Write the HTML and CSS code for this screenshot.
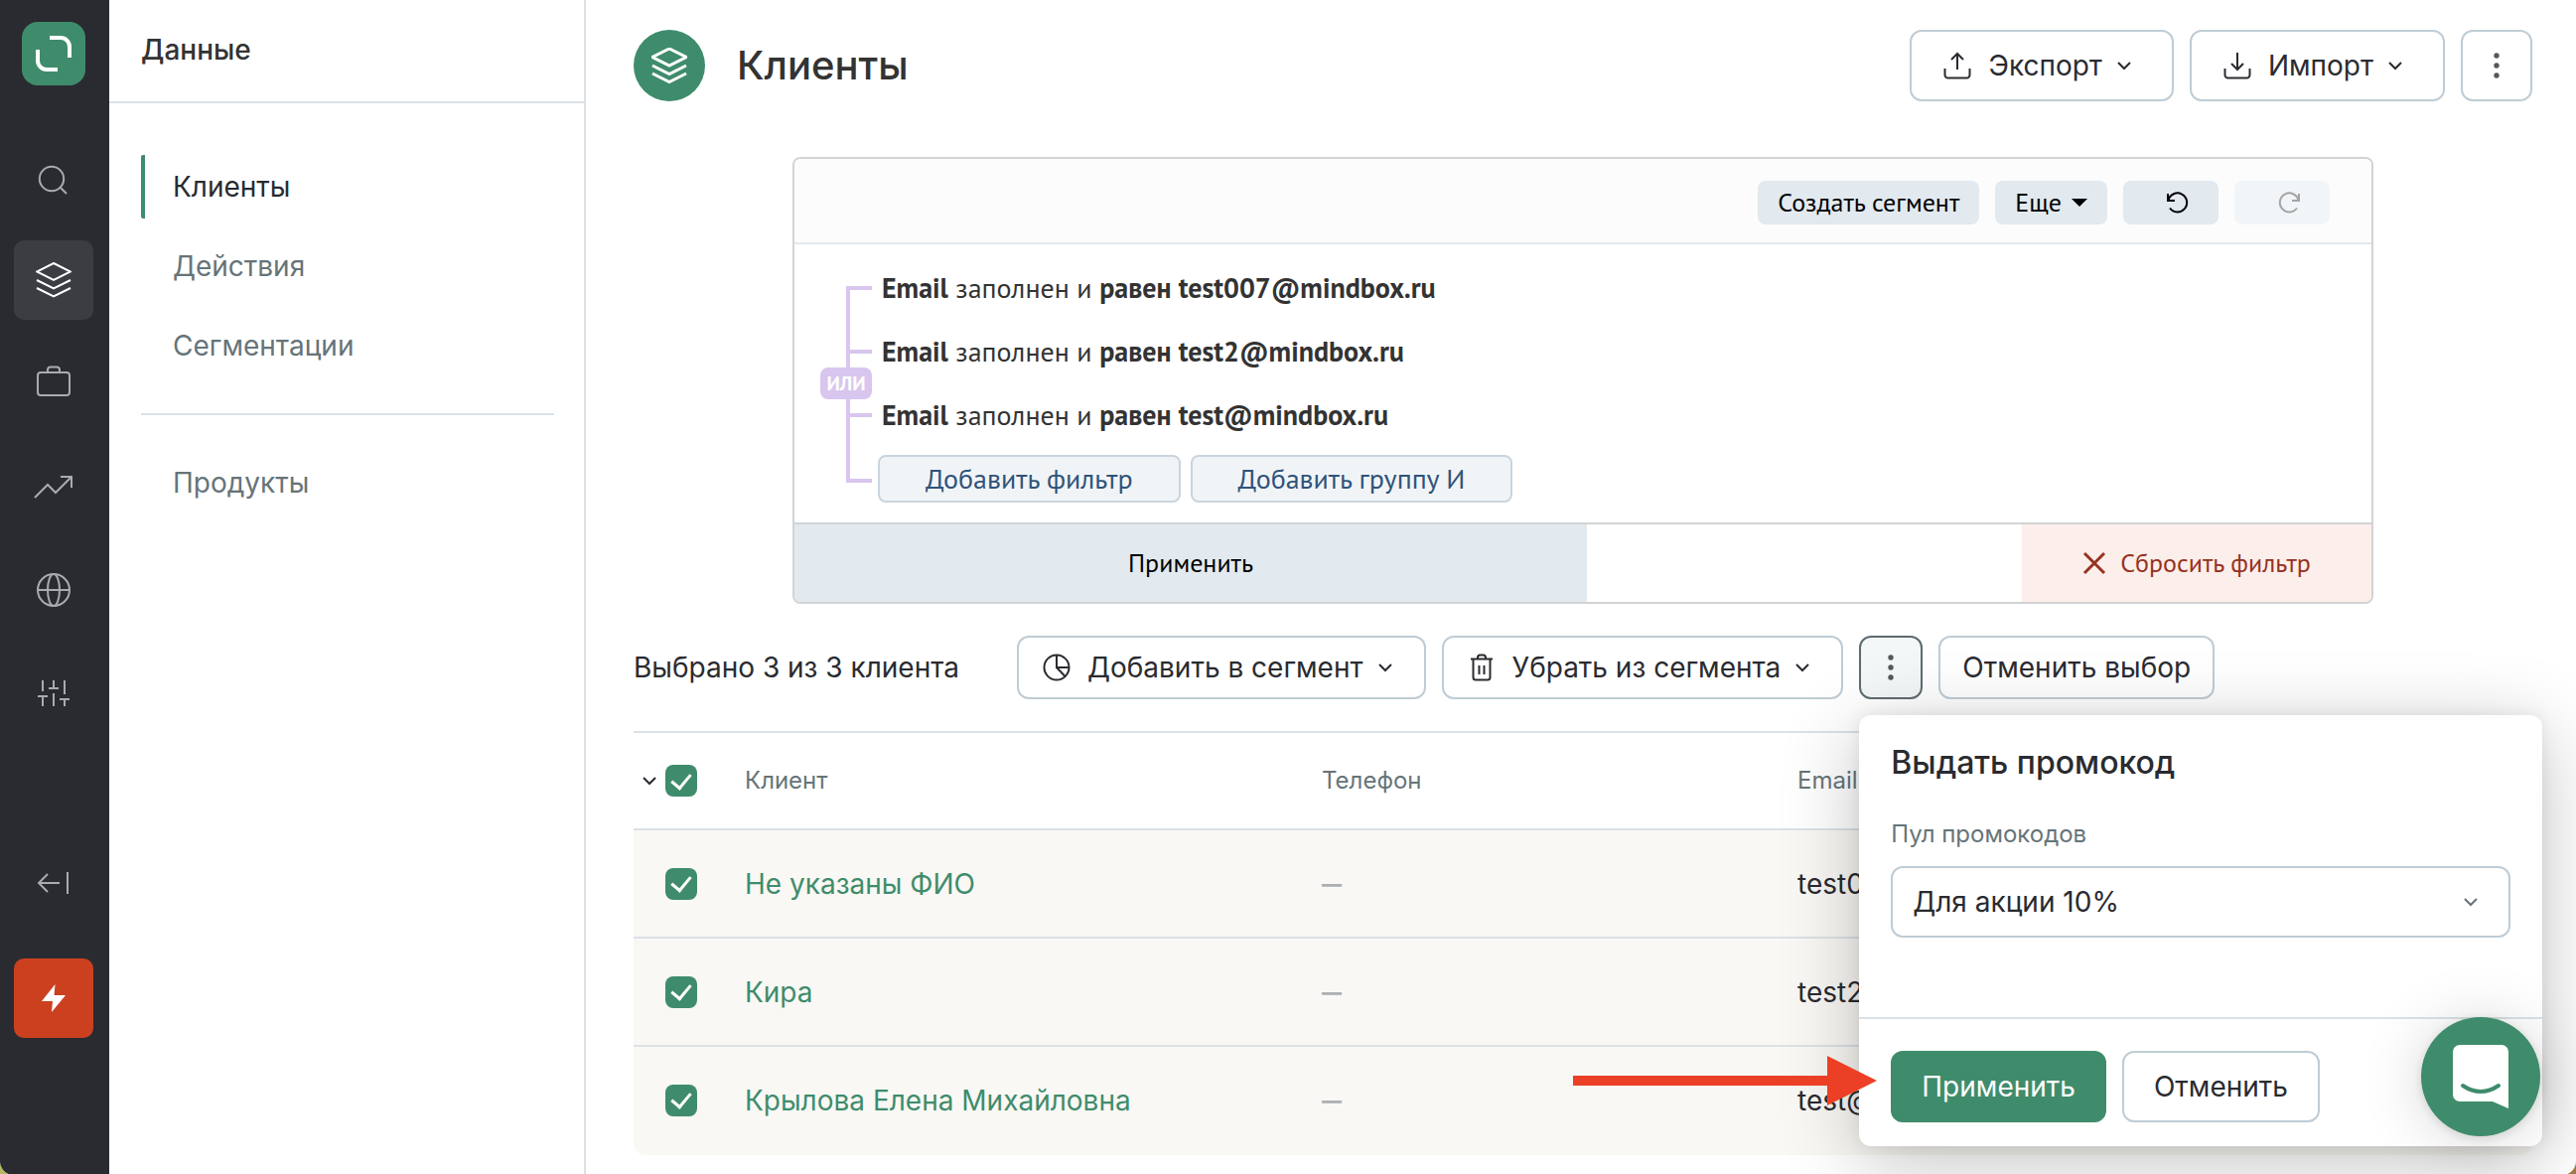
FILE: index.html
```html
<!DOCTYPE html>
<html lang="ru">
<head>
<meta charset="utf-8">
<title>Клиенты</title>
<meta name="viewport" content="width=device-width, initial-scale=1">
<link rel="stylesheet" href="styles.css">
</head>
<body>
<svg class="sprite" aria-hidden="true">
  <symbol id="i-layers" viewBox="0 0 36 36"><path d="M18 1 35 9.500 18 18 1 9.500zM1 18l17 8.500L35 18M1 26l17 8.500L35 26"/></symbol>
  <symbol id="i-chevron" viewBox="0 0 16 16"><path d="M2 5l6 6 6-6"/></symbol>
  <symbol id="i-dots" viewBox="0 0 6 30"><circle cx="3" cy="5" r="2.700"/><circle cx="3" cy="15" r="2.700"/><circle cx="3" cy="25" r="2.700"/></symbol>
</svg>
<div class="app">
  <nav class="rail" aria-label="Разделы">
    <a class="rail-logo" href="#" aria-label="Главная"><svg width="36" height="36" viewBox="0 0 36 36"><path d="M14 2h11a9 9 0 0 1 9 9v11M2 14v11a9 9 0 0 0 9 9h11"/></svg></a>
    <a class="rail-item" href="#" aria-label="Поиск"><svg width="36" height="36" viewBox="0 0 36 36"><circle cx="16" cy="20" r="12.200"/><path d="M24.500 28.500 31 35"/></svg></a>
    <a class="rail-item rail-item-active" href="#" aria-label="Данные"><svg width="36" height="36"><use href="#i-layers"/></svg></a>
    <a class="rail-item" href="#" aria-label="Кампании"><svg width="36" height="36" viewBox="0 0 36 36"><rect x="2" y="7" width="32" height="23" rx="3"/><path d="M12 7V4.500A3 3 0 0 1 15 1.500h6a3 3 0 0 1 3 3V7"/></svg></a>
    <a class="rail-item" href="#" aria-label="Отчеты"><svg width="40" height="36" viewBox="0 0 40 36"><path d="M1 29 14 16l8 8L38 8M27 8h11v11"/></svg></a>
    <a class="rail-item" href="#" aria-label="Сайты"><svg width="36" height="36" viewBox="0 0 36 36"><circle cx="18" cy="18" r="16"/><ellipse cx="18" cy="18" rx="6" ry="16"/><path d="M2 18h32"/></svg></a>
    <a class="rail-item" href="#" aria-label="Настройки"><svg width="36" height="36" viewBox="0 0 36 36"><path d="M7 5v11M7 21v10M2 21h10M18 5v8M13 13h10M18 18v13M29 5v14M29 24v7M24 24h10"/></svg></a>
    <button class="rail-item rail-collapse" type="button" aria-label="Свернуть"><svg width="36" height="36" viewBox="0 0 36 36"><path d="M3 18h21M12 9l-9 9 9 9M32 7v22"/></svg></button>
    <button class="rail-item rail-alert" type="button" aria-label="События"><svg width="28" height="28" viewBox="0 0 28 28"><path d="M15.500 0 2 17h11l-1 11L26 11H14.500z"/></svg></button>
  </nav>
  <aside class="side">
    <h2 class="side-title">Данные</h2>
    <ul class="side-menu">
      <li><a class="side-link side-link-active" href="#">Клиенты</a></li>
      <li><a class="side-link" href="#">Действия</a></li>
      <li><a class="side-link" href="#">Сегментации</a></li>
    </ul>
    <ul class="side-menu side-menu-extra">
      <li><a class="side-link" href="#">Продукты</a></li>
    </ul>
  </aside>
  <main class="main">
    <header class="head">
      <span class="head-icon"><svg width="36" height="36"><use href="#i-layers"/></svg></span>
      <h1 class="head-title">Клиенты</h1>
      <button class="btn btn-menu" type="button"><svg class="lead" width="28" height="28" viewBox="0 0 28 28"><path d="M14 18V2M8 8l6-6 6 6M1.500 17v6.500a3 3 0 0 0 3 3h19a3 3 0 0 0 3-3V17"/></svg>Экспорт<svg class="chev" width="16" height="16"><use href="#i-chevron"/></svg></button>
      <button class="btn btn-menu" type="button"><svg class="lead" width="28" height="28" viewBox="0 0 28 28"><path d="M14 1v17M8 12l6 6 6-6M1.500 17v6.500a3 3 0 0 0 3 3h19a3 3 0 0 0 3-3V17"/></svg>Импорт<svg class="chev" width="16" height="16"><use href="#i-chevron"/></svg></button>
      <button class="btn btn-dots" type="button" aria-label="Еще"><svg width="6" height="30"><use href="#i-dots"/></svg></button>
    </header>

    <section class="filter" aria-label="Фильтр">
      <div class="filter-bar">
        <button class="fbtn" type="button">Создать сегмент</button>
        <button class="fbtn" type="button">Еще<span class="caret"></span></button>
        <button class="fbtn fbtn-icon" type="button" aria-label="Отменить"><svg width="24" height="24" viewBox="0 0 24 24"><path d="M2 3v7h7M2.500 9.500A9.500 9.500 0 1 1 4 17.500"/></svg></button>
        <button class="fbtn fbtn-icon" type="button" aria-label="Повторить" disabled><svg width="24" height="24" viewBox="0 0 24 24"><path d="M22 3v7h-7M21.500 9.500A9.500 9.500 0 1 0 20 17.500"/></svg></button>
      </div>
      <div class="group">
        <div class="tree">
          <span class="tree-line"></span>
          <span class="tree-tag">ИЛИ</span>
        </div>
        <ul class="rules">
          <li class="rule"><b>Email</b> заполнен и <b>равен test007@mindbox.ru</b></li>
          <li class="rule"><b>Email</b> заполнен и <b>равен test2@mindbox.ru</b></li>
          <li class="rule"><b>Email</b> заполнен и <b>равен test@mindbox.ru</b></li>
          <li class="rule-add"><button class="add" type="button">Добавить фильтр</button><button class="add" type="button">Добавить группу И</button></li>
        </ul>
      </div>
      <div class="filter-foot">
        <button class="apply" type="button">Применить</button>
        <button class="reset" type="button"><svg width="24" height="24" viewBox="0 0 24 24"><path d="M2 2l20 20M22 2 2 22"/></svg>Сбросить фильтр</button>
      </div>
    </section>

    <div class="selection">
      <p class="selection-count">Выбрано 3 из 3 клиента</p>
      <button class="btn btn-small" type="button"><svg class="lead" width="28" height="28" viewBox="0 0 28 28"><circle cx="14" cy="14" r="12.500"/><path d="M14 1.500V14h12.500M14 14l8.500 9"/></svg>Добавить в сегмент<svg class="chev" width="16" height="16"><use href="#i-chevron"/></svg></button>
      <button class="btn btn-small" type="button"><svg class="lead" width="28" height="28" viewBox="0 0 28 28"><path d="M3 5.500h22M5.500 5.500V24a2.500 2.500 0 0 0 2.500 2.500h12a2.500 2.500 0 0 0 2.500-2.500V5.500M10 5V4a2.500 2.500 0 0 1 2.500-2.500h3A2.500 2.500 0 0 1 18 4v1M11.500 12v9M16.500 12v9"/></svg>Убрать из сегмента<svg class="chev" width="16" height="16"><use href="#i-chevron"/></svg></button>
      <div class="more">
        <button class="btn btn-small btn-dots btn-open" type="button" aria-label="Действия" aria-expanded="true"><svg width="6" height="30"><use href="#i-dots"/></svg></button>
        <form class="popup" aria-labelledby="popup-title">
          <div class="popup-body">
            <h2 class="popup-title" id="popup-title">Выдать промокод</h2>
            <label class="popup-label" for="pool">Пул промокодов</label>
            <div class="select">
              <select id="pool"><option>Для акции 10%</option></select>
              <svg class="select-chev" width="16" height="16"><use href="#i-chevron"/></svg>
            </div>
          </div>
          <div class="popup-foot">
            <button class="btn btn-primary" type="button">Применить</button>
            <button class="btn btn-cancel" type="button">Отменить</button>
          </div>
          <svg class="pointer" width="306" height="50" viewBox="0 0 306 50" aria-hidden="true"><path d="M0 20h256V0l50 25-50 25V30H0z"/></svg>
        </form>
      </div>
      <button class="btn btn-small btn-plain" type="button">Отменить выбор</button>
    </div>

    <table class="clients">
      <colgroup><col class="c-check"><col class="c-name"><col class="c-phone"><col></colgroup>
      <thead>
        <tr><th><span class="check-all"><svg width="16" height="16"><use href="#i-chevron"/></svg><input type="checkbox" aria-label="Выбрать всех" checked></span></th><th>Клиент</th><th>Телефон</th><th>Email</th></tr>
      </thead>
      <tbody>
        <tr><td><input type="checkbox" aria-label="Не указаны ФИО" checked></td><td><a href="#">Не указаны ФИО</a></td><td class="empty">—</td><td>test007@mindbox.ru</td></tr>
        <tr><td><input type="checkbox" aria-label="Кира" checked></td><td><a href="#">Кира</a></td><td class="empty">—</td><td>test2@mindbox.ru</td></tr>
        <tr><td><input type="checkbox" aria-label="Крылова Елена Михайловна" checked></td><td><a href="#">Крылова Елена Михайловна</a></td><td class="empty">—</td><td>test@mindbox.ru</td></tr>
      </tbody>
    </table>
  </main>
</div>
<button class="chat" type="button" aria-label="Чат"><svg width="56" height="64" viewBox="0 0 56 64"><path class="chat-box" d="M7 0h42a7 7 0 0 1 7 7v57l-16-7H7a7 7 0 0 1-7-7V7a7 7 0 0 1 7-7z"/><path class="chat-smile" d="M10 41q18 12 36 0"/></svg></button>
</body>
</html>
```
FILE: styles.css
```css
:root {
  --green: #3f8c6c;
  --ink: #2a2b30;
  --gray: #667479;
  --line: #dae2e7;
  --edge: #bfccd5;
}

* { box-sizing: border-box; }

body {
  margin: 0;
  background: linear-gradient(90deg, #b5b85f, #a07848);
  color: var(--ink);
  font: 28px/40px Inter, "Liberation Sans", sans-serif;
}

h1, h2, p, ul { margin: 0; padding: 0; font-weight: 500; }
p { font-weight: 400; }
ul { list-style: none; font-weight: 400; }
a { color: inherit; text-decoration: none; }
button { font: inherit; color: inherit; cursor: pointer; padding: 0; border: 0; background: none; }
svg { display: block; flex: none; fill: none; stroke: currentColor; stroke-width: 2; }
.sprite { position: absolute; width: 0; height: 0; }

.app {
  display: flex;
  min-height: 100vh;
  background: #fff;
  border-radius: 0 0 14px 14px;
  overflow: hidden;
}

/* Icon rail */
.rail {
  flex: none;
  width: 110px;
  padding: 22px 0 0 14px;
  display: flex;
  flex-direction: column;
  gap: 24px;
  background: #2a2b30;
  color: #a9abad;
}
.rail-logo {
  width: 64px;
  height: 64px;
  margin: 0 0 28px 8px;
  display: grid;
  place-items: center;
  border-radius: 16px;
  background: var(--green);
  color: #fff;
}
.rail-logo svg { stroke-width: 4; }
.rail-item {
  width: 80px;
  height: 80px;
  display: grid;
  place-items: center;
  border-radius: 10px;
}
.rail-item-active { background: #3b3d42; color: #fff; }
.rail-collapse { margin-top: 87px; }
.rail-alert { margin-top: 12px; background: #cb4120; color: #fff; }
.rail-alert svg { fill: currentColor; stroke: none; }

/* Section menu */
.side { flex: none; width: 480px; border-right: 2px solid var(--line); }
.side-title {
  padding: 30px 32px 32px;
  border-bottom: 2px solid var(--line);
  color: #333;
  font-size: 28px;
  line-height: 40px;
}
.side-menu {
  margin: 0 30px 0 32px;
  padding: 52px 0 36px;
  display: grid;
  gap: 16px;
}
.side-menu-extra { border-top: 2px solid var(--line); padding-top: 36px; }
.side-link {
  display: block;
  padding: 12px 0 12px 28px;
  border-left: 4px solid transparent;
  border-radius: 2px;
  color: var(--gray);
}
.side-link-active { border-color: var(--green); color: var(--ink); }

/* Page */
.main { flex: 1; min-width: 0; padding: 30px 44px 20px 48px; }
.head { display: flex; align-items: center; gap: 16px; margin-bottom: 56px; }
.head-icon {
  width: 72px;
  height: 72px;
  display: grid;
  place-items: center;
  border-radius: 50%;
  background: var(--green);
  color: #fff;
}
.head-icon svg { stroke-width: 3; }
.head-title { flex: 1; padding-left: 16px; color: #333; font-size: 40px; line-height: 48px; }

.btn {
  height: 72px;
  display: flex;
  align-items: center;
  justify-content: center;
  border: 2px solid var(--edge);
  border-radius: 12px;
  background: #fff;
  white-space: nowrap;
}
.btn-menu { padding: 0 40px 0 32px; }
.btn-small { height: 64px; padding: 0 31px 0 24px; }
.btn-plain { padding: 0 22px; background: none; }
.btn .lead { margin-right: 17px; }
.btn .chev { margin-left: 14px; }
.btn-dots { width: 72px; padding: 0; color: #55595d; }
.btn-dots svg { fill: currentColor; stroke: none; }
.btn-open { width: 64px; border-color: #5f6b70; background: #f3f7f8; }

/* Filter builder */
.filter {
  max-width: 1592px;
  margin: 0 auto 32px;
  border: 2px solid #d2d3d4;
  border-radius: 8px;
  overflow: hidden;
  font-family: "PT Sans", "Noto Sans", sans-serif;
}
.filter-bar {
  display: flex;
  justify-content: flex-end;
  gap: 16px;
  padding: 22px 42px 18px;
  border-bottom: 2px solid #e2e9ef;
  background: #fcfcfc;
}
.fbtn {
  height: 44px;
  padding: 0 20px;
  display: flex;
  align-items: center;
  justify-content: center;
  border-radius: 8px;
  background: #e2e9ef;
  color: #000;
  font-size: 26px;
}
.fbtn-icon { width: 96px; padding-left: 34px; }
.fbtn:disabled { background: #f2f5f7; color: #a3a5a7; }
.caret { margin-left: 10px; border: 8px solid transparent; border-top-color: #000; border-bottom: 0; }

.group { display: flex; padding: 12px 26px 20px; }
.tree { position: relative; flex: none; width: 52px; margin-right: 6px; }
.tree-line {
  position: absolute;
  inset: 30px 0 20px 26px;
  border: 4px solid #d8c6ee;
  border-right: 0;
}
.tree-line::before, .tree-line::after {
  content: "";
  position: absolute;
  left: 0;
  right: 0;
  top: 60px;
  height: 4px;
  background: #d8c6ee;
}
.tree-line::after { top: 124px; }
.tree-tag {
  position: absolute;
  top: 112px;
  left: 0;
  width: 52px;
  height: 32px;
  border-radius: 8px;
  background: #d8c6ee;
  color: #fff;
  font-size: 20px;
  line-height: 32px;
  font-weight: 700;
  text-align: center;
}
.rules { color: #333; font-size: 28px; }
.rule { padding-left: 4px; line-height: 64px; }
.rule-add { display: flex; gap: 10px; padding-top: 8px; }
.add {
  height: 48px;
  padding: 0 46px;
  border: 2px solid #c8d5df;
  border-radius: 8px;
  background: #f1f4f7;
  color: #2f537a;
}
.filter-foot { display: flex; height: 80px; border-top: 2px solid #d2d3d4; font-size: 26px; }
.apply { width: 798px; background: #e2e9ef; color: #000; }
.reset {
  width: 352px;
  margin-left: auto;
  display: flex;
  align-items: center;
  justify-content: center;
  gap: 14px;
  background: #fceeeb;
  color: #963221;
}
.reset svg { stroke-width: 3; }

/* Bulk actions */
.selection { display: flex; align-items: center; gap: 16px; margin-bottom: 32px; }
.selection-count { margin-right: 42px; }
.more { position: relative; }
.popup {
  position: absolute;
  z-index: 2;
  top: 80px;
  left: 0;
  width: 688px;
  border-radius: 12px;
  background: #fff;
  box-shadow: 0 16px 80px rgba(0, 0, 0, .24), 0 0 16px rgba(0, 0, 0, .08);
}
.popup-body { padding: 28px 32px 80px; }
.popup-title { margin-bottom: 32px; font-size: 32px; line-height: 40px; }
.popup-label { display: block; margin-bottom: 12px; color: var(--gray); font-size: 24px; }
.select { position: relative; }
.select select {
  appearance: none;
  width: 100%;
  height: 72px;
  padding: 0 20px;
  border: 2px solid var(--edge);
  border-radius: 12px;
  background: #fff;
  color: inherit;
  font: inherit;
}
.select-chev { position: absolute; right: 32px; top: 28px; color: var(--gray); }
.popup-foot { display: flex; gap: 16px; padding: 32px 32px 24px; border-top: 2px solid var(--line); }
.btn-primary { padding: 0 29px; border-color: var(--green); background: var(--green); color: #fff; }
.btn-cancel { padding: 0 30px; }
.pointer { position: absolute; left: -288px; top: 343px; pointer-events: none; }
.pointer path { fill: #eb4025; stroke: none; }

/* Client list */
.clients { width: 100%; table-layout: fixed; border-collapse: separate; border-spacing: 0; }
.c-check { width: 112px; }
.c-name { width: 581px; }
.c-phone { width: 479px; }
.clients th {
  height: 100px;
  padding: 0;
  border: solid var(--line);
  border-width: 2px 0;
  color: var(--gray);
  font-size: 24px;
  font-weight: 400;
  text-align: left;
}
.clients td { height: 109px; padding: 0; background: #f9f8f4; border-bottom: 2px solid var(--line); }
.clients tr:last-child td { border-bottom-color: transparent; }
.clients tbody tr:last-child td:first-child { border-bottom-left-radius: 12px; }
.clients tbody tr:last-child td:last-child { border-bottom-right-radius: 12px; }
.clients td:first-child { padding-left: 32px; }
.clients a { color: var(--green); }
.clients .empty { color: #adb0b2; font-size: 20px; font-weight: 800; }
.check-all { display: flex; align-items: center; gap: 8px; padding-left: 8px; color: var(--ink); }
input[type="checkbox"] {
  appearance: none;
  width: 32px;
  height: 32px;
  margin: 0;
  border-radius: 8px;
  background: var(--green);
  display: grid;
  place-items: center;
}
input[type="checkbox"]:checked::before {
  content: "";
  width: 9px;
  height: 16px;
  margin-bottom: 4px;
  border: solid #fff;
  border-width: 0 3px 3px 0;
  rotate: 40deg;
}

/* Support chat */
.chat {
  position: fixed;
  z-index: 3;
  right: 36px;
  bottom: 38px;
  width: 120px;
  height: 120px;
  display: grid;
  place-items: center;
  border-radius: 50%;
  background: var(--green);
  color: #fff;
  box-shadow: 0 2px 12px rgba(0, 0, 0, .12), 0 4px 64px rgba(0, 0, 0, .16);
}
.chat-box { fill: #fff; stroke: none; }
.chat-smile { stroke: var(--green); stroke-width: 4; stroke-linecap: round; }
```
